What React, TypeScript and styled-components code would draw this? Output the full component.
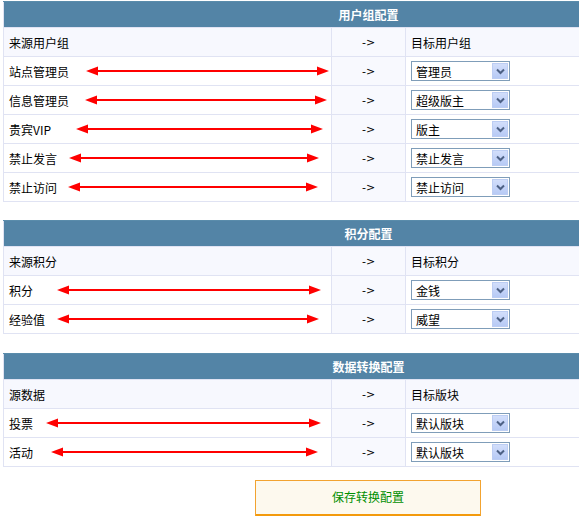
import React from 'react';
import styled, { createGlobalStyle } from 'styled-components';

const GlobalStyle = createGlobalStyle`
  html, body {
    margin: 0;
    padding: 0;
    background: #ffffff;
    overflow: hidden;
  }
  body {
    font-family: "Noto Sans CJK SC", "Liberation Sans", sans-serif;
    font-size: 12px;
    color: #000;
  }
`;

type Row = { from: string; to: string; left: number; right: number };

const groupRows: Row[] = [
  { from: '站点管理员', to: '管理员', left: 17, right: 2 },
  { from: '信息管理员', to: '超级版主', left: 16, right: 4 },
  { from: '贵宾VIP', to: '版主', left: 25, right: 8 },
  { from: '禁止发言', to: '禁止发言', left: 12, right: 12 },
  { from: '禁止访问', to: '禁止访问', left: 11, right: 13 },
];

const creditRows: Row[] = [
  { from: '积分', to: '金钱', left: 24, right: 10 },
  { from: '经验值', to: '威望', left: 12, right: 12 },
];

const dataRows: Row[] = [
  { from: '投票', to: '默认版块', left: 13, right: 10 },
  { from: '活动', to: '默认版块', left: 18, right: 13 },
];

const Arrow = ({ left, right }: { left: number; right: number }) => (
  <ArrowWrap $left={left} $right={right}>
    <svg width="100%" height="12" preserveAspectRatio="none" viewBox="0 0 100 12">
      <line x1="4" y1="6" x2="96" y2="6" stroke="#ff0000" strokeWidth="2" vectorEffect="non-scaling-stroke" />
    </svg>
    <Head $side="left" viewBox="0 0 12 12" width="12" height="12">
      <polygon points="0,6 12,1.5 12,10.5" fill="#ff0000" />
    </Head>
    <Head $side="right" viewBox="0 0 12 12" width="12" height="12">
      <polygon points="12,6 0,1.5 0,10.5" fill="#ff0000" />
    </Head>
  </ArrowWrap>
);

const Selector = ({ value }: { value: string }) => (
  <SelectBox>
    <SelectText>{value}</SelectText>
    <DropBtn>
      <svg width="9" height="7" viewBox="0 0 9 7">
        <polyline points="1,1.5 4.5,5 8,1.5" fill="none" stroke="#4d6185" strokeWidth="2" />
      </svg>
    </DropBtn>
  </SelectBox>
);

const ConfigTable = ({
  title,
  source,
  target,
  rows,
  shift = 0,
}: {
  title: string;
  source: string;
  target: string;
  rows: Row[];
  shift?: number;
}) => (
  <Table $shift={shift}>
    <colgroup>
      <col style={{ width: 328 }} />
      <col style={{ width: 74 }} />
      <col style={{ width: 328 }} />
    </colgroup>
    <thead>
      <tr>
        <HeadCell colSpan={3}>{title}</HeadCell>
      </tr>
    </thead>
    <tbody>
      <tr>
        <Cell $tint>{source}</Cell>
        <MidCell>-&gt;</MidCell>
        <Cell $tint>{target}</Cell>
      </tr>
      {rows.map((r) => (
        <tr key={r.from}>
          <Cell>
            <FromLine>
              <span>{r.from}</span>
              <Arrow left={r.left} right={r.right} />
            </FromLine>
          </Cell>
          <MidCell>-&gt;</MidCell>
          <Cell>
            <Selector value={r.to} />
          </Cell>
        </tr>
      ))}
    </tbody>
  </Table>
);

export default function App() {
  return (
    <>
      <GlobalStyle />
      <Frame>
        <Page>
          <ConfigTable title="用户组配置" source="来源用户组" target="目标用户组" rows={groupRows} />
          <ConfigTable title="积分配置" source="来源积分" target="目标积分" rows={creditRows} />
          <ConfigTable title="数据转换配置" source="源数据" target="目标版块" rows={dataRows} shift={1} />
          <ButtonRow>
            <SaveButton>保存转换配置</SaveButton>
          </ButtonRow>
        </Page>
      </Frame>
    </>
  );
}

const Frame = styled.div`
  width: 100%;
  overflow: hidden;
`;

const Page = styled.div`
  width: 730px;
  padding: 1px 0 0 3px;
  display: flex;
  flex-direction: column;
  gap: 18px;
`;

const Table = styled.table<{ $shift: number }>`
  width: 730px;
  margin-top: ${(p) => p.$shift}px;
  border-collapse: collapse;
  table-layout: fixed;
  border: 1px solid #dfe2f2;
`;

const HeadCell = styled.th`
  height: 25px;
  padding: 0;
  background: #5384a6;
  color: #ffffff;
  font-weight: bold;
  font-size: 12px;
  text-align: center;
  border-top: 1px solid #5a8cab;
`;

const Cell = styled.td<{ $tint?: boolean }>`
  height: 28px;
  padding: 0 0 0 5px;
  border: 1px solid #e0e3f3;
  background: ${(p) => (p.$tint ? '#f7f8fe' : '#ffffff')};
  vertical-align: middle;
`;

const MidCell = styled.td`
  height: 28px;
  padding: 0;
  text-align: center;
  border: 1px solid #e0e3f3;
  background: #f8f9fe;
  font-family: "DejaVu Sans", sans-serif;
  font-size: 11px;
`;

const FromLine = styled.div`
  display: flex;
  align-items: center;
`;

const ArrowWrap = styled.div<{ $left: number; $right: number }>`
  position: relative;
  flex: 1;
  height: 12px;
  margin-left: ${(p) => p.$left}px;
  margin-right: ${(p) => p.$right}px;

  svg:first-child {
    display: block;
  }
`;

const Head = styled.svg<{ $side: 'left' | 'right' }>`
  position: absolute;
  top: 0;
  ${(p) => (p.$side === 'left' ? 'left: 0;' : 'right: 0;')}
`;

const SelectBox = styled.div`
  width: 96px;
  height: 18px;
  border: 1px solid #7f9db9;
  background: #ffffff;
  display: flex;
  align-items: center;
  justify-content: space-between;
  padding: 0 1px 0 0;
`;

const SelectText = styled.span`
  padding-left: 4px;
  font-size: 12px;
`;

const DropBtn = styled.span`
  width: 16px;
  height: 16px;
  display: flex;
  align-items: center;
  justify-content: center;
  background: linear-gradient(#d2defb, #b7caf5);
  border: 1px solid #bccdf3;
  box-sizing: border-box;
`;

const ButtonRow = styled.div`
  display: flex;
  justify-content: center;
  margin-top: -5px;
`;

const SaveButton = styled.button`
  width: 226px;
  height: 38px;
  background: #fdf9ee;
  border: 1px solid #f2a330;
  border-bottom: 4px solid #f39a0c;
  color: #008f00;
  font-family: "Noto Sans CJK SC", sans-serif;
  font-size: 12px;
  padding: 0 0 2px;
`;
